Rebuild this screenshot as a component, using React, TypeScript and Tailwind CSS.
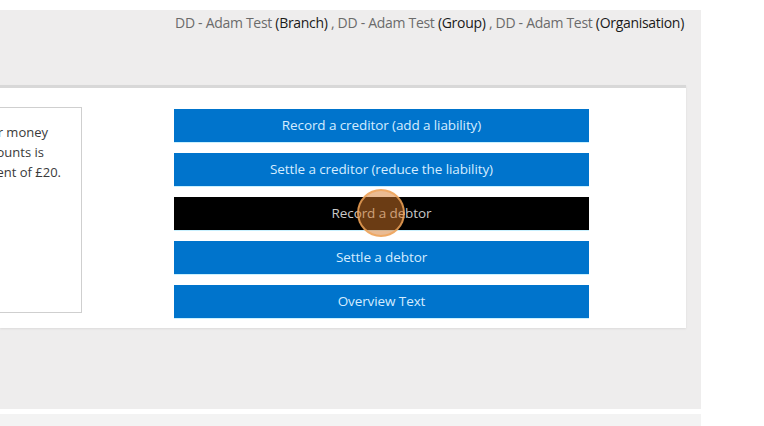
import React from 'react';

const ACTIONS = [
  { label: 'Record a creditor (add a liability)', active: false },
  { label: 'Settle a creditor (reduce the liability)', active: false },
  { label: 'Record a debtor', active: true },
  { label: 'Settle a debtor', active: false },
  { label: 'Overview Text', active: false },
];

const ENTITIES = ['Branch', 'Group', 'Organisation'];

export default function App() {
  return (
    <div
      className="relative w-[764px] h-[426px] overflow-hidden bg-white"
      style={{ fontFamily: '"Open Sans", "Liberation Sans", sans-serif' }}
    >
      <div className="mt-[10px] w-[701px] h-[399px] bg-[#eeeded] flex flex-col">
        <div className="h-[75px] pt-[3px] pr-[17px] text-right text-[14px] leading-[20px] text-[#6b6b6b] tracking-[-0.3px]">
          {ENTITIES.map((e, i) => (
            <span key={e}>
              {i > 0 && ' , '}
              DD - Adam Test <span className="text-[#1a1a1a]">({e})</span>
            </span>
          ))}
        </div>

        <div className="w-[686px] h-[243px] bg-white border-t-[3px] border-[#d8d8d8] shadow-[0_1px_2px_rgba(0,0,0,0.08)] flex items-start">
          {/* description box, cropped at the left edge of the view */}
          <div className="ml-[-220px] mt-[19px] w-[302px] h-[206px] border border-[#cfcfcf] pt-[14px] text-[13px] leading-[20px] text-[#3a3a3a] text-right">
            <p className="whitespace-nowrap pr-[33px]">For example, if you transfer money</p>
            <p className="whitespace-nowrap pr-[37px]">between the two accounts is</p>
            <p className="whitespace-nowrap pr-[20px]">recorded as a payment of £20.</p>
          </div>

          <div className="ml-[92px] mt-[21px] w-[415px] flex flex-col gap-[11px]">
            {ACTIONS.map((a) => (
              <button
                key={a.label}
                className={`h-[33px] w-full text-[13.5px] tracking-[-0.1px] shadow-[0_1px_0_#c9f1ff] ${
                  a.active ? 'bg-black text-[#c8c8c8]' : 'bg-[#0074cc] text-[#d4ecff]'
                }`}
              >
                {a.label}
              </button>
            ))}
          </div>
        </div>
      </div>

      <div className="mt-[5px] w-[701px] h-[12px] bg-[#f3f3f3]" />

      {/* click indicator */}
      <div className="absolute left-[357px] top-[189px] w-[48px] h-[48px] rounded-full bg-[rgba(214,120,40,0.5)] border-2 border-[rgba(240,165,90,0.8)]" />
    </div>
  );
}
